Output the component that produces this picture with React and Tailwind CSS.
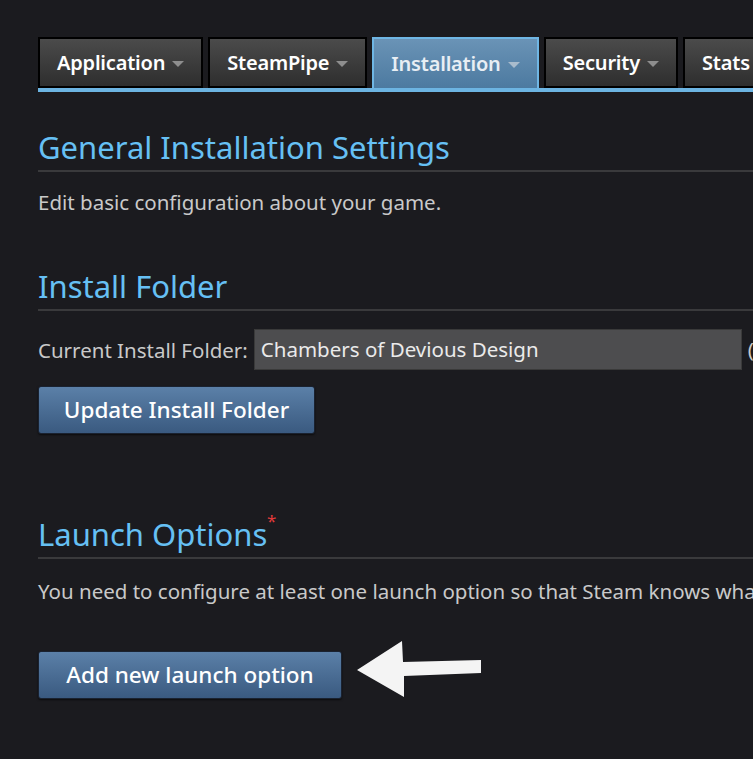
import React from "react";

const Caret = ({ c = "#9a9a9a" }) => (
  <svg width="12" height="7" viewBox="0 0 12 7" className="ml-[7px] mt-[3px]">
    <polygon points="0,0 12,0 6,6" fill={c} />
  </svg>
);

function Tab({ label, active, caret = true }) {
  return (
    <div
      className={
        "flex h-[51px] shrink-0 items-center border-2 px-[17px] " +
        (active
          ? "border-[#6fb6e4] border-b-0 bg-gradient-to-b from-[#6a93b6] to-[#4c7aa0]"
          : "border-black bg-gradient-to-b from-[#4b4b4b] to-[#2e2e2e]")
      }
    >
      <span
        className={
          "text-[20px] font-semibold tracking-[-0.2px] " +
          (active ? "text-[#e8eef4]" : "text-white")
        }
      >
        {label}
      </span>
      {caret && <Caret c={active ? "#a9bccd" : "#8e8e8e"} />}
    </div>
  );
}

function Heading({ children, star }) {
  return (
    <div className="border-b-2 border-[#3a3a3c] pb-[5px]">
      <h2 className="relative inline-block text-[31px] leading-[36px] text-[#66c0f4]">
        {children}
        {star && (
          <span className="absolute -right-[9px] top-[-4px] text-[17px] leading-none text-[#e23a3a]">*</span>
        )}
      </h2>
    </div>
  );
}

function Button({ children, w }) {
  return (
    <button
      className={
        "flex h-[48px] items-center justify-center rounded-[3px] border border-[#1a2230] bg-gradient-to-b from-[#5b80a8] to-[#3a5a80] text-[22.5px] font-medium text-white shadow-[0_1px_2px_rgba(0,0,0,0.6)] " +
        w
      }
    >
      {children}
    </button>
  );
}

export default function App() {
  return (
    <div
      className="h-[759px] w-[753px] overflow-hidden bg-[#1b1b1f]"
      style={{ fontFamily: '"Noto Sans", "Open Sans", sans-serif' }}
    >
      <div className="pt-[37px]">
        <div className="ml-[38px] flex gap-[5px]">
          <Tab label="Application" />
          <Tab label="SteamPipe" />
          <Tab label="Installation" active />
          <Tab label="Security" />
          <Tab label="Stats" caret={false} />
        </div>
        <div className="ml-[38px] h-[4px] bg-[#6cb4e2]" />
      </div>

      <div className="pl-[38px]">
        <div className="mt-[37px]">
          <Heading>General Installation Settings</Heading>
          <p className="mt-[16px] text-[20.5px] leading-[28px] text-[#c9c9c9]">Edit basic configuration about your game.</p>
        </div>

        <div className="mt-[52px]">
          <Heading>Install Folder</Heading>
          <div className="mt-[18px] flex items-center whitespace-nowrap">
            <span className="text-[20.5px] leading-[28px] text-[#c9c9c9]">Current Install Folder:</span>
            <div className="ml-[6px] flex h-[41px] w-[488px] shrink-0 items-center border border-[#3a3a3a] bg-[#4d4d4f] px-[6px] text-[20.5px] text-[#eaeaea]">
              Chambers of Devious Design
            </div>
            <span className="ml-[6px] text-[20.5px] text-[#c9c9c9]">(</span>
          </div>
          <div className="mt-[16px]">
            <Button w="w-[277px]">Update Install Folder</Button>
          </div>
        </div>

        <div className="mt-[82px]">
          <Heading star>Launch Options</Heading>
          <p className="mt-[18px] whitespace-nowrap text-[20.5px] leading-[28px] text-[#c9c9c9]">
            You need to configure at least one launch option so that Steam knows wha
          </p>
          <div className="relative mt-[46px]">
            <Button w="w-[304px]">Add new launch option</Button>
            <svg
              className="absolute left-[319px] top-[-10px]"
              width="126"
              height="58"
              viewBox="0 0 126 58"
            >
              <polygon
                points="0,29 45,0 46,21 124,19 124,32 47,35 47,56"
                fill="#f4f4f4"
              />
            </svg>
          </div>
        </div>
      </div>
    </div>
  );
}
